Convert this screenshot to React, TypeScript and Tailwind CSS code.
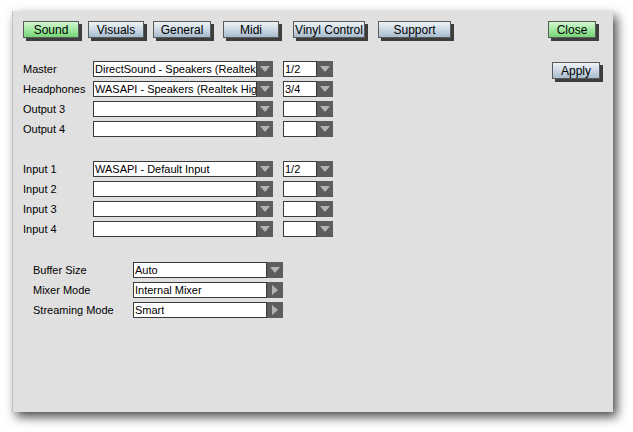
import type { ReactNode } from 'react';

type TabButtonProps = {
  label: string;
  width: string;
  active?: boolean;
  className?: string;
};

function TabButton({ label, width, active, className }: TabButtonProps) {
  const face = active
    ? 'bg-gradient-to-b from-[#d2f7d2] via-[#a4e8a4] to-[#74d574]'
    : 'bg-gradient-to-b from-[#eef3f7] via-[#cdd9e4] to-[#a7bbce]';

  return (
    <button
      type="button"
      className={`${width} ${face} ${className ?? ''} flex h-[17px] shrink-0 items-center justify-center border border-[#5a5a5a] text-[12px] leading-none text-black shadow-[3px_3px_0_#3d3d3d]`}
    >
      {label}
    </button>
  );
}

function DownArrow() {
  return (
    <svg width="10" height="6" viewBox="0 0 10 6">
      <polygon points="0,0 10,0 5,6" fill="#b4b4b4" />
    </svg>
  );
}

function RightArrow() {
  return (
    <svg width="6" height="10" viewBox="0 0 6 10">
      <polygon points="0,0 6,5 0,10" fill="#b4b4b4" />
    </svg>
  );
}

type ComboProps = {
  width: string;
  value?: string;
  arrow?: ReactNode;
};

function Combo({ width, value = '', arrow = <DownArrow /> }: ComboProps) {
  return (
    <div className={`${width} flex h-[16px] shrink-0`}>
      <div className="flex min-w-0 flex-1 items-center overflow-hidden border border-[#3a3a3a] bg-white pl-[1px]">
        <span className="block min-w-0 overflow-hidden whitespace-nowrap text-[11px] leading-none text-black">{value}</span>
      </div>
      <div className="flex w-[16px] shrink-0 items-center justify-center bg-[#5d5d5d]">{arrow}</div>
    </div>
  );
}

type DeviceRowProps = {
  label: string;
  device?: string;
  channels?: string;
};

function DeviceRow({ label, device, channels }: DeviceRowProps) {
  return (
    <div className="flex h-[16px] items-center">
      <span className="w-[70px] shrink-0 text-[11px] leading-none text-black">{label}</span>
      <Combo width="w-[180px]" value={device} />
      <div className="ml-[10px]">
        <Combo width="w-[50px]" value={channels} />
      </div>
    </div>
  );
}

type OptionRowProps = {
  label: string;
  value: string;
  arrow?: ReactNode;
};

function OptionRow({ label, value, arrow }: OptionRowProps) {
  return (
    <div className="flex h-[16px] items-center">
      <span className="w-[100px] shrink-0 text-[11px] leading-none text-black">{label}</span>
      <Combo width="w-[150px]" value={value} arrow={arrow} />
    </div>
  );
}

export default function App() {
  return (
    <div className="h-[432px] w-[633px] overflow-hidden bg-white pl-[12px] pt-[11px] font-['Liberation_Sans',Arial,sans-serif]">
      <div className="flex h-[401px] w-[601px] flex-col border-l border-[#c4c4c4] bg-[#e0e0e0] pl-[10px] pt-[10px] shadow-[4px_5px_10px_rgba(0,0,0,0.7)]">
        <div className="flex items-start">
          <TabButton label="Sound" width="w-[56px]" active />
          <TabButton label="Visuals" width="w-[56px]" className="ml-[9px]" />
          <TabButton label="General" width="w-[58px]" className="ml-[9px]" />
          <TabButton label="Midi" width="w-[56px]" className="ml-[12px]" />
          <TabButton label="Vinyl Control" width="w-[72px]" className="ml-[14px]" />
          <TabButton label="Support" width="w-[73px]" className="ml-[13px]" />
          <TabButton label="Close" width="w-[48px]" active className="ml-[97px]" />
        </div>

        <div className="mt-[23px] flex items-start pr-[13px]">
          <div className="flex flex-col gap-[4px]">
            <DeviceRow label="Master" device="DirectSound - Speakers (Realtek High Definition Audio)" channels="1/2" />
            <DeviceRow label="Headphones" device="WASAPI - Speakers (Realtek High Definition Audio)" channels="3/4" />
            <DeviceRow label="Output 3" />
            <DeviceRow label="Output 4" />
            <div className="h-[16px]" />
            <DeviceRow label="Input 1" device="WASAPI - Default Input" channels="1/2" />
            <DeviceRow label="Input 2" />
            <DeviceRow label="Input 3" />
            <DeviceRow label="Input 4" />

            <div className="mt-[21px] flex flex-col gap-[4px] pl-[10px]">
              <OptionRow label="Buffer Size" value="Auto" />
              <OptionRow label="Mixer Mode" value="Internal Mixer" arrow={<RightArrow />} />
              <OptionRow label="Streaming Mode" value="Smart" arrow={<RightArrow />} />
            </div>
          </div>

          <TabButton label="Apply" width="w-[48px]" className="ml-auto mt-[1px]" />
        </div>
      </div>
    </div>
  );
}
